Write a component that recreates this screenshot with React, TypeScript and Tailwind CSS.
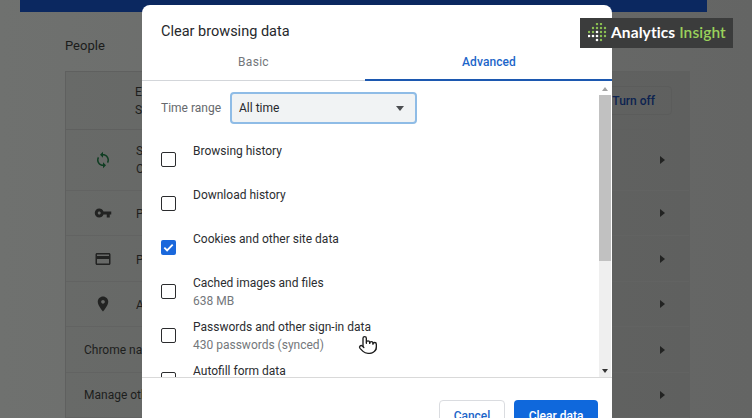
import { Pointer } from 'lucide-react'

const ROBOTO = 'font-[Roboto,sans-serif]'

const ITEMS: { label: string; sub?: string; checked?: boolean }[] = [
  { label: 'Browsing history' },
  { label: 'Download history' },
  { label: 'Cookies and other site data', checked: true },
  { label: 'Cached images and files', sub: '638 MB' },
  { label: 'Passwords and other sign-in data', sub: '430 passwords (synced)' },
  { label: 'Autofill form data' },
]

const PATHS = {
  sync: 'M12 4V1L8 5l4 4V6c3.31 0 6 2.69 6 6 0 1.01-.25 1.97-.7 2.8l1.46 1.46C19.54 15.03 20 13.57 20 12c0-4.42-3.58-8-8-8zm0 14c-3.31 0-6-2.69-6-6 0-1.01.25-1.97.7-2.8L5.24 7.74C4.46 8.97 4 10.43 4 12c0 4.42 3.58 8 8 8v3l4-4-4-4v3z',
  key: 'M12.65 10C11.83 7.67 9.61 6 7 6c-3.31 0-6 2.69-6 6s2.69 6 6 6c2.61 0 4.83-1.67 5.65-4H17v4h4v-4h2v-4H12.65zM7 14c-1.1 0-2-.9-2-2s.9-2 2-2 2 .9 2 2-.9 2-2 2z',
  card: 'M20 4H4c-1.11 0-1.99.89-1.99 2L2 18c0 1.11.89 2 2 2h16c1.11 0 2-.89 2-2V6c0-1.11-.89-2-2-2zm0 14H4v-6h16v6zm0-10H4V6h16v2z',
  place: 'M12 2C8.13 2 5 5.13 5 9c0 5.25 7 13 7 13s7-7.75 7-13c0-3.87-3.13-7-7-7zm0 9.5c-1.38 0-2.5-1.12-2.5-2.5s1.12-2.5 2.5-2.5 2.5 1.12 2.5 2.5-1.12 2.5-2.5 2.5z',
}

function MatIcon({ d, className }: { d: string; className: string }) {
  return (
    <svg viewBox="0 0 24 24" className={className} fill="currentColor">
      <path d={d} />
    </svg>
  )
}

function Arrow() {
  return <span className="ml-auto mr-[24px] h-0 w-0 border-y-[4px] border-l-[5px] border-y-transparent border-l-[#222322]" />
}

function BgRow({ h, icon, iconClass, children }: { h: string; icon?: string; iconClass?: string; children?: React.ReactNode }) {
  return (
    <div className={`flex items-center border-b border-[#626362] ${h}`}>
      {icon ? (
        <>
          <div className="flex w-[74px] justify-center">
            <MatIcon d={icon} className={iconClass ?? 'size-[18px] text-[#222322]'} />
          </div>
          <div className="-ml-[4px]">{children}</div>
        </>
      ) : (
        <div className="pl-[18px] text-[12px] text-[#1d1e1d]">{children}</div>
      )}
      <Arrow />
    </div>
  )
}

function Backdrop() {
  return (
    <div className="h-full w-full bg-gradient-to-r from-[#6f716f] to-[#646564]">
      <div className="ml-[20px] h-3 w-[687px] bg-[#0b2860]" />
      <div className="ml-[65px] mt-[27px] text-[13px] leading-[14px] text-[#1b1c1b]">People</div>
      <div className="ml-[65px] mt-[18px] w-[625px] border-x border-t border-[#5f605f] bg-black/5">
        <div className="flex h-[58px] items-center border-b border-[#5f605f] pl-[69px]">
          <div className="text-[12px] leading-[18px] text-[#1d1e1d]">
            <div>E</div>
            <div>S</div>
          </div>
          <div className="ml-auto mr-[17px] flex h-[29px] w-[72px] items-center justify-end rounded border border-[#5b5c5b] pr-[16px] text-[12px] font-medium text-[#0c2350]">
            Turn off
          </div>
        </div>
        <BgRow h="h-[61px]" icon={PATHS.sync} iconClass="size-[18px] text-[#0f3d22]">
          <div className="text-[12px] leading-[18px] text-[#1d1e1d]">
            <div>S</div>
            <div>O</div>
          </div>
        </BgRow>
        <BgRow h="h-[45px]" icon={PATHS.key}>
          <span className="text-[12px] text-[#1d1e1d]">P</span>
        </BgRow>
        <BgRow h="h-[46px]" icon={PATHS.card}>
          <span className="text-[12px] text-[#1d1e1d]">P</span>
        </BgRow>
        <BgRow h="h-[45px]" icon={PATHS.place}>
          <span className="text-[12px] text-[#1d1e1d]">A</span>
        </BgRow>
        <BgRow h="h-[46px]">Chrome name</BgRow>
        <BgRow h="h-[45px]">Manage other people</BgRow>
      </div>
    </div>
  )
}

function Checkbox({ checked }: { checked?: boolean }) {
  if (checked) {
    return (
      <span className="-mt-[1px] flex size-[15px] shrink-0 items-center justify-center rounded-[2px] bg-[#1a68dc]">
        <svg viewBox="0 0 14 14" className="size-[13px]" fill="none" stroke="#fff" strokeWidth="2">
          <path d="M2.5 7.2l3 3 6-6.2" />
        </svg>
      </span>
    )
  }
  return <span className="-mt-[1px] size-[15px] shrink-0 rounded-[2px] border-[1.5px] border-[#2b2c2e] bg-white" />
}

function ScrollBar() {
  return (
    <div className="flex w-[12px] shrink-0 flex-col bg-[#efefef]">
      <div className="flex h-[12px] items-center justify-center bg-white">
        <span className="h-0 w-0 border-x-[3px] border-b-[4px] border-x-transparent border-b-[#a3a3a3]" />
      </div>
      <div className="h-[166px] bg-[#c1c1c1]" />
      <div className="flex-1" />
      <div className="flex h-[12px] items-center justify-center">
        <span className="h-0 w-0 border-x-[3px] border-t-[4px] border-x-transparent border-t-[#333]" />
      </div>
    </div>
  )
}

function Dialog() {
  return (
    <div className="flex h-full flex-col rounded-t-[8px] bg-white">
      <div className="pl-[19px] pt-[18px] text-[14.5px] leading-[18px] text-[#26282b]">Clear browsing data</div>
      <div className="mt-[9px] flex h-[31px] border-b border-[#d3d6da]">
        <div className="flex w-[223px] items-center justify-center pb-[6px] text-[12px] font-normal tracking-[0.3px] text-[#73767a]">Basic</div>
        <div className="-mb-px flex flex-1 items-center justify-center border-b-2 border-[#1c58b0] pb-[5px] pl-[1px] text-[12px] font-medium tracking-[0.1px] text-[#1d66c9]">Advanced</div>
      </div>
      <div className="flex h-[296px] overflow-hidden pl-[19px] pr-[1px] pt-[2px]">
        <div className="min-w-0 flex-1">
          <div className="flex items-center pt-[9px]">
            <span className="w-[69px] text-[12px] text-[#66696d]">Time range</span>
            <div className="flex h-[32px] w-[187px] items-center justify-between rounded-[4px] border-2 border-[#8fbce6] bg-[#f1f3f4] pl-[7px] pr-[11px] text-[12px] text-[#27292c]">
              All time
              <span className="h-0 w-0 border-x-[4.5px] border-t-[5px] border-x-transparent border-t-[#4c4e51]" />
            </div>
          </div>
          <div className="mt-[14px]">
            {ITEMS.map(item => (
              <div key={item.label} className="flex h-[44px] items-center">
                <Checkbox checked={item.checked} />
                <div className="ml-[17px] h-[36px] text-[12px] leading-[18px]">
                  <div className="text-[#2b2d30]">{item.label}</div>
                  {item.sub && <div className="text-[#74777b]">{item.sub}</div>}
                </div>
              </div>
            ))}
          </div>
        </div>
        <ScrollBar />
      </div>
      <div className="flex flex-1 justify-end gap-[9px] border-t border-[#d9d9d9] pr-[14px] pt-[22px]">
        <div className="flex h-[32px] w-[66px] items-center justify-center rounded-[4px] border border-[#dadce0] text-[12px] font-medium text-[#1d66c9]">Cancel</div>
        <div className="flex h-[32px] w-[84px] items-center justify-center rounded-[4px] bg-[#0f68dc] text-[12px] font-medium text-white">Clear data</div>
      </div>
    </div>
  )
}

function Logo() {
  const green: [number, number][] = [[9, 1], [13, 1], [5, 5], [9, 5], [13, 5], [17, 5], [1, 9], [5, 9], [13, 9], [17, 9], [13, 13], [17, 13], [13, 17]]
  const white: [number, number][] = [[9, 9], [1, 13], [5, 13], [9, 13], [9, 17]]
  return (
    <div className="flex h-[30px] w-[153px] items-center bg-[#3b3c3c] pl-[8px]">
      <svg viewBox="0 0 19 20" className="h-[20px] w-[19px] shrink-0">
        {green.map(([x, y]) => <circle key={`${x}-${y}`} cx={x} cy={y} r="1.2" fill="#8cc152" />)}
        {white.map(([x, y]) => <circle key={`${x}-${y}`} cx={x} cy={y} r="1.3" fill="#fff" />)}
      </svg>
      <span className="ml-[4px] font-['Lato',sans-serif] text-[15.5px] font-bold leading-none tracking-[0.1px] text-white">
        Analytics <span className="font-semibold text-[#9ad15b]">Insight</span>
      </span>
    </div>
  )
}

export default function App() {
  return (
    <div className={`relative h-[418px] w-[752px] overflow-hidden ${ROBOTO}`}>
      <Backdrop />
      <div className="absolute left-[142px] top-[5px] h-[440px] w-[470px]">
        <Dialog />
      </div>
      <div className="absolute left-[580px] top-[18px]">
        <Logo />
      </div>
      <Pointer className="absolute left-[358px] top-[335px] size-[20px] fill-white text-[#1c1c1c]" strokeWidth={1.6} />
    </div>
  )
}
